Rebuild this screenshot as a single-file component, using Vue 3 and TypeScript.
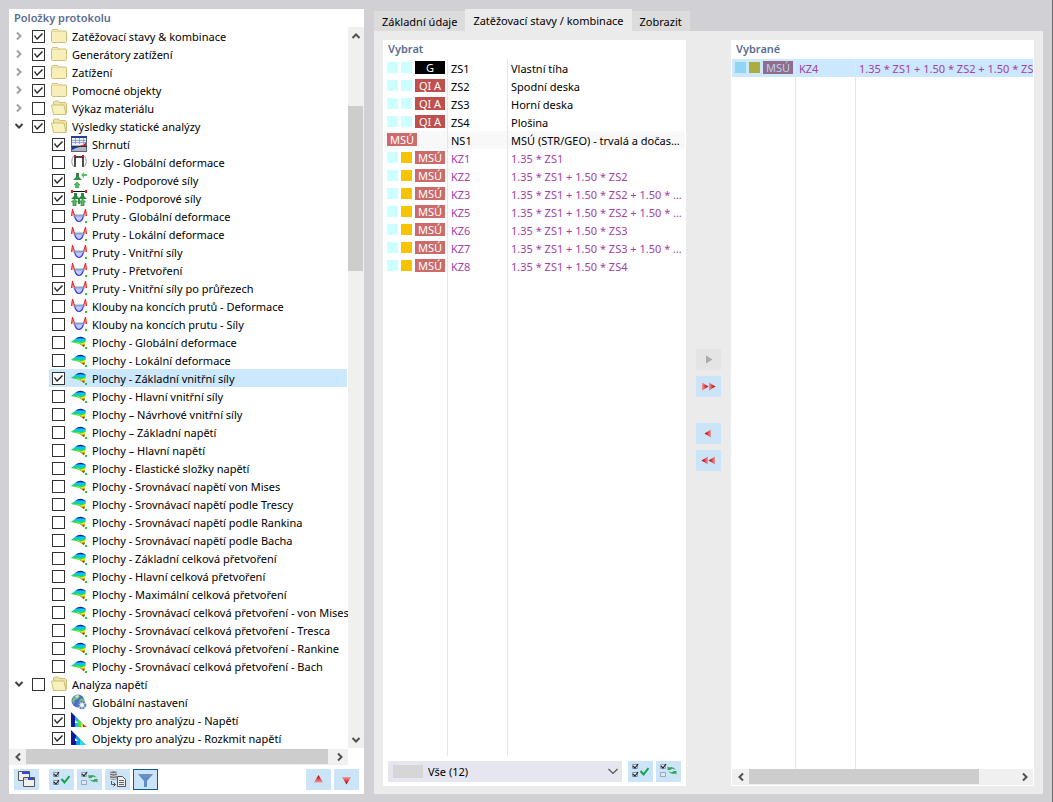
<script setup lang="ts">
import { ref } from 'vue'

interface TreeItem {
  text: string
  icon: string
  checked: boolean
  level: number
  open?: boolean
  selected?: boolean
}

interface CaseRow {
  swatches: string[]
  badge: string
  kind: string
  id: string
  text: string
  combo?: boolean
  group?: boolean
  selected?: boolean
}

const folder = (text: string, icon: string, checked: boolean, open = false): TreeItem => ({ text, icon, checked, level: 0, open })
const leaf = (text: string, icon: string, checked = false, selected = false): TreeItem => ({ text, icon, checked, level: 1, selected })

const items = ref<TreeItem[]>([
  folder('Zatěžovací stavy & kombinace', 'folder', true),
  folder('Generátory zatížení', 'folder', true),
  folder('Zatížení', 'folder', true),
  folder('Pomocné objekty', 'folder', true),
  folder('Výkaz materiálu', 'folder-open', false),
  folder('Výsledky statické analýzy', 'folder-open', true, true),
  leaf('Shrnutí', 'summary', true),
  leaf('Uzly - Globální deformace', 'node-deform'),
  leaf('Uzly - Podporové síly', 'node-support', true),
  leaf('Linie - Podporové síly', 'line-support', true),
  leaf('Pruty - Globální deformace', 'member'),
  leaf('Pruty - Lokální deformace', 'member'),
  leaf('Pruty - Vnitřní síly', 'member'),
  leaf('Pruty - Přetvoření', 'member'),
  leaf('Pruty - Vnitřní síly po průřezech', 'member', true),
  leaf('Klouby na koncích prutů - Deformace', 'member'),
  leaf('Klouby na koncích prutu - Síly', 'member'),
  leaf('Plochy - Globální deformace', 'surface'),
  leaf('Plochy - Lokální deformace', 'surface'),
  leaf('Plochy - Základní vnitřní síly', 'surface', true, true),
  leaf('Plochy - Hlavní vnitřní síly', 'surface'),
  leaf('Plochy – Návrhové vnitřní síly', 'surface'),
  leaf('Plochy – Základní napětí', 'surface'),
  leaf('Plochy – Hlavní napětí', 'surface'),
  leaf('Plochy - Elastické složky napětí', 'surface'),
  leaf('Plochy - Srovnávací napětí von Mises', 'surface'),
  leaf('Plochy - Srovnávací napětí podle Trescy', 'surface'),
  leaf('Plochy - Srovnávací napětí podle Rankina', 'surface'),
  leaf('Plochy - Srovnávací napětí podle Bacha', 'surface'),
  leaf('Plochy - Základní celková přetvoření', 'surface'),
  leaf('Plochy - Hlavní celková přetvoření', 'surface'),
  leaf('Plochy - Maximální celková přetvoření', 'surface'),
  leaf('Plochy - Srovnávací celková přetvoření - von Mises', 'surface'),
  leaf('Plochy - Srovnávací celková přetvoření - Tresca', 'surface'),
  leaf('Plochy - Srovnávací celková přetvoření - Rankine', 'surface'),
  leaf('Plochy - Srovnávací celková přetvoření - Bach', 'surface'),
  folder('Analýza napětí', 'folder-open', false, true),
  leaf('Globální nastavení', 'globe'),
  leaf('Objekty pro analýzu - Napětí', 'stress', true),
  leaf('Objekty pro analýzu - Rozkmit napětí', 'stress-range', true),
])

const load = (id: string, text: string, badge: string, kind: string): CaseRow => ({ swatches: ['aqua', 'aqua'], badge, kind, id, text })
const combo = (id: string, text: string): CaseRow => ({ swatches: ['aqua', 'gold'], badge: 'MSÚ', kind: 'uls', id, text, combo: true })

const available: CaseRow[] = [
  load('ZS1', 'Vlastní tíha', 'G', 'dead'),
  load('ZS2', 'Spodní deska', 'QI A', 'live'),
  load('ZS3', 'Horní deska', 'QI A', 'live'),
  load('ZS4', 'Plošina', 'QI A', 'live'),
  { swatches: [], badge: 'MSÚ', kind: 'uls', id: 'NS1', text: 'MSÚ (STR/GEO) - trvalá a dočasná', group: true },
  combo('KZ1', '1.35 * ZS1'),
  combo('KZ2', '1.35 * ZS1 + 1.50 * ZS2'),
  combo('KZ3', '1.35 * ZS1 + 1.50 * ZS2 + 1.50 * ZS3'),
  combo('KZ5', '1.35 * ZS1 + 1.50 * ZS2 + 1.50 * ZS4'),
  combo('KZ6', '1.35 * ZS1 + 1.50 * ZS3'),
  combo('KZ7', '1.35 * ZS1 + 1.50 * ZS3 + 1.50 * ZS4'),
  combo('KZ8', '1.35 * ZS1 + 1.50 * ZS4'),
]

const chosen: CaseRow[] = [
  { swatches: ['sky', 'olive'], badge: 'MSÚ', kind: 'muted', id: 'KZ4', text: '1.35 * ZS1 + 1.50 * ZS2 + 1.50 * ZS3 + 1.50 * ZS4', combo: true, selected: true },
]

const lists = [
  { key: 'available', title: 'Vybrat', rows: available },
  { key: 'chosen', title: 'Vybrané', rows: chosen },
]

const tabs = ['Základní údaje', 'Zatěžovací stavy / kombinace', 'Zobrazit']
const activeTab = ref(1)
const filter = ref('all')

const tools = [
  { icon: 'windows', label: 'Okna' },
  { icon: 'check-all', label: 'Vybrat vše' },
  { icon: 'check-invert', label: 'Invertovat výběr' },
  { icon: 'data-copy', label: 'Převzít data' },
  { icon: 'funnel', label: 'Filtr' },
]
const transfers = [
  { icon: 'right-grey', label: 'Přidat', off: true },
  { icon: 'right-all', label: 'Přidat vše', off: false },
  { icon: 'left', label: 'Odebrat', off: false },
  { icon: 'left-all', label: 'Odebrat vše', off: false },
]
</script>

<template>
  <svg class="defs" aria-hidden="true">
    <defs>
      <linearGradient id="red-r"><stop offset="0" stop-color="#ec9a9a" /><stop offset="0.8" stop-color="#c80c10" /></linearGradient>
      <linearGradient id="red-l"><stop offset="0.2" stop-color="#c80c10" /><stop offset="1" stop-color="#ec9a9a" /></linearGradient>
      <linearGradient id="red-v" x2="0" y2="1"><stop offset="0.2" stop-color="#c80c10" /><stop offset="1" stop-color="#f09a9a" /></linearGradient>
      <linearGradient id="red-d" x2="0" y2="1"><stop offset="0" stop-color="#f09a9a" /><stop offset="0.8" stop-color="#c80c10" /></linearGradient>

      <symbol id="folder" viewBox="0 0 16 16">
        <path d="M.5 13.5V3.5l1-2h5l1 1.500h7.500l.5.5v10l-1 1h-13z" fill="#f7eeb8" stroke="#cdbf78" />
        <path d="M1.500 3.500h6" stroke="#e1d695" fill="none" />
      </symbol>
      <symbol id="folder-open" viewBox="0 0 16 16">
        <path d="M2.500 4V2l1-1h4l1 1.500h6l1 1V13l-1 1h-12z" fill="#efe4a4" stroke="#cdbf78" />
        <path d="M.5 5h12.500l2 9.500H2.500z" fill="#f8f0bd" stroke="#cdbf78" />
      </symbol>
      <symbol id="summary" viewBox="0 0 16 16">
        <path d="M0 0h16v16H0z" fill="#56617c" />
        <path d="M0 0h16v2H0z" fill="#25418f" />
        <path d="M1 2h14v7H1z" fill="#eef1fa" />
        <path d="M1 4.500h14M1 6.500h14M4.500 2v6M8.500 2v6M12.500 2v6" stroke="#8496cc" stroke-width=".8" fill="none" />
        <path d="M1 9h14v6H1z" fill="#b4b7c0" />
        <path d="M15 6v4H8q5-.5 7-4z" fill="#cc2a17" />
        <path d="M1 14v-3h8q-4 .5-8 3z" fill="#1237b0" />
        <path d="M0 10.500h16" stroke="#2b3244" />
      </symbol>
      <symbol id="node-deform" viewBox="0 0 16 16">
        <path d="M4 13V3h8v10" fill="none" stroke="#111" stroke-width="1.500" />
        <path d="M2.500 2Q-1 7.500 2.500 12.500M13.500 2q3.500 5.500 0 10.500" fill="none" stroke="#999" />
        <path d="M3 1h2v2H3zM11 1h2v2h-2z" fill="#e01818" />
        <path d="M3 11h2v2H3zM11 11h2v2h-2z" fill="#555" />
      </symbol>
      <symbol id="node-support" viewBox="0 0 16 16">
        <path d="M5 2h3v3l3 3H2l3-3z" fill="#2e9148" />
        <path d="M5 1h3v3H5z" fill="#4b7757" />
        <path d="M10 3l3-3v2h3v2h-3v2z" fill="#5cbc67" />
        <path d="M6 10l3 3H7.500v3h-3v-3H3z" fill="#4abf5c" stroke="#258b3a" stroke-width=".5" />
      </symbol>
      <symbol id="line-support" viewBox="0 0 16 16">
        <path d="M1 1.500h14" stroke="#111" />
        <path d="M0 0h2v3H0zM14 0h2v3h-2z" fill="#ee1717" />
        <path d="M3 3h3v3l2 2 2-2V3h3v3l3 3H0l3-3z" fill="#2b8a42" />
        <path d="M3.500 9l3 3H5v4H2v-4H.5zM11.500 9l3 3H13v4h-3v-4H8.500z" fill="#50bd5f" stroke="#23823a" stroke-width=".7" />
        <path d="M7 9h2v5H7z" fill="#2f9045" />
      </symbol>
      <symbol id="member" viewBox="0 0 16 16">
        <path d="M3.500 8q1.500 5.500 4.500 5.500T12.500 8z" fill="#c3c8fb" />
        <path d="M3.500 8q1.500 5.500 4.500 5.500T12.500 8" fill="none" stroke="#3838f0" stroke-width="1.200" />
        <path d="M2 7.500h12" stroke="#7fa6c8" stroke-width="2" />
        <path d="M1 1L.5 8H4zM15 1l.5 7H12z" fill="#f6a0a0" />
        <path d="M.5 8L1.500 1 3.500 7.500M15.500 8l-1-7-2 6.500" stroke="#e81e1e" fill="none" />
        <path d="M14 13h2v2h-2z" fill="#24c72f" />
      </symbol>
      <symbol id="surface" viewBox="0 0 16 16">
        <path d="M0 8l4-3q5-2.500 11 0l-2 8Q8 8.500 0 8z" fill="#05c8f2" />
        <path d="M4 5q3-2.500 6-2.300T15 5q-6-1.700-11 0z" fill="#10249d" />
        <path d="M0 8l3-1.500q4 0 7 2l4.500-2.500L13 13Q8 8.500 0 8z" fill="#25dc45" />
        <path d="M5 8q3 .3 5 1.500l4.200-1.500L13 13Q9.500 9.500 5 8z" fill="#f7ee10" />
        <path d="M8 9.300q2 .4 3 1.200l2.800-.5L13 13q-2-2.500-5-3.700z" fill="#f18500" />
        <path d="M10.500 11q1.500.2 3 .2L13 13z" fill="#c81408" />
        <path d="M14 13h2v2h-2z" fill="#24c72f" />
      </symbol>
      <symbol id="globe" viewBox="0 0 16 16">
        <circle cx="7" cy="7" r="6.500" fill="#4670cc" />
        <path d="M2 4l3-3 4 1-2 3-3 1-1 4-2-3zM9 5l4-1v4l-3 2-2-2z" fill="#79bd79" />
        <path d="M4 2l3-1 1 1-2 2z" fill="#d5e8ef" />
        <circle cx="11" cy="11" r="3.300" fill="#dce6f4" stroke="#6586b6" stroke-width="2.200" stroke-dasharray="2 .7" />
        <path d="M10 10h2v2h-2z" fill="#fff" />
      </symbol>
      <symbol id="stress" viewBox="0 0 16 16">
        <path d="M0 0l4 4v11H0z" fill="#10189c" />
        <path d="M4 4l3 3v8H4z" fill="#13bdf5" />
        <path d="M7 7l3 3v5H7z" fill="#50df52" />
        <path d="M10 10l3 3v2h-3z" fill="#f6e600" />
        <path d="M12 12l4 3h-4z" fill="#d81c0b" />
        <path d="M4 8l3 3H4z" fill="#fff" />
        <path d="M0 0l15 15" stroke="#8c9b9b" stroke-width=".6" />
      </symbol>
      <symbol id="stress-range" viewBox="0 0 16 16">
        <path d="M0 0l5 5v10H0z" fill="#10189c" />
        <path d="M5 5l4 4v6H5z" fill="#159af0" />
        <path d="M9 9l6 6H9z" fill="#17e5f4" />
        <path d="M4 8l3 3H4z" fill="#fff" />
        <path d="M0 0l15 15" stroke="#8c9b9b" stroke-width=".6" />
      </symbol>

      <symbol id="windows" viewBox="0 0 17 17">
        <path d="M.5.5h11v9H.5z" fill="#eee" stroke="#555" />
        <path d="M4 1h7v2H4z" fill="#2f48e0" />
        <path d="M5.500 6.500h11v9h-11z" fill="#f1f1f1" stroke="#555" />
        <path d="M6 7h10v2H6z" fill="#cfcfcf" /><path d="M10 7h6v2h-6z" fill="#2f48e0" />
      </symbol>
      <symbol id="check-all" viewBox="0 0 17 17">
        <path d="M.5 1.500h5v4h-5zM.5 9.500h5v4h-5z" fill="#eef3f7" stroke="#8496a6" />
        <path d="M1 3l2 2 3-4M1 11l2 2 3-4" fill="none" stroke="#222" stroke-width="1.200" />
        <path d="M8.500 8l3 3.500L16.500 5" fill="none" stroke="#12a347" stroke-width="2" />
      </symbol>
      <symbol id="check-invert" viewBox="0 0 17 17">
        <path d="M.5 1.500h5v4h-5zM.5 9.500h5v4h-5z" fill="#dce9f4" stroke="#9baab7" />
        <path d="M1 3l2 2 3-4" fill="none" stroke="#222" stroke-width="1.200" />
        <path d="M7.500 7V3.500l1.500 1q4-1.500 7 2.500-3.500-2-5.500-.8l1 .8zM16.500 8v3.500l-1.500-1q-4 1.500-7-2.500 3.500 2 5.500.8l-1-.8z" fill="#35a457" />
      </symbol>
      <symbol id="data-copy" viewBox="0 0 17 17">
        <path d="M1 1q3.500-1.500 7 0v7q-3.500 1.500-7 0z" fill="#777" />
        <path d="M1 2q3.500 1.500 7 0M1 4.500q3.500 1.500 7 0M1 7q3.500 1.500 7 0" fill="none" stroke="#ddd" />
        <path d="M2.500 10v3.500h4M4.500 11.500l2 2-2 2" fill="none" stroke="#555" />
        <path d="M8.500 5.500h5l3 3v7h-8z" fill="#eee" stroke="#555" />
        <path d="M10 9.500h5M10 11.500h5M10 13.500h5" stroke="#666" />
      </symbol>
      <symbol id="funnel" viewBox="0 0 17 17">
        <path d="M1 3h15l-6 7v6H7v-6z" fill="#5f8cc6" /><path d="M2 3h13l-2 3H5z" fill="#718fbe" />
      </symbol>
      <symbol id="up" viewBox="0 0 17 17"><path d="M8.500 4l4.500 7.500H4z" fill="url(#red-v)" /></symbol>
      <symbol id="down" viewBox="0 0 17 17"><path d="M4 6h9l-4.500 7.500z" fill="url(#red-d)" /></symbol>
      <symbol id="right-grey" viewBox="0 0 17 17"><path d="M6 4.500l6.500 4L6 12.500z" fill="#aaa" /></symbol>
      <symbol id="right-all" viewBox="0 0 17 17">
        <path d="M2 4.500l6.500 4L2 12.500z" fill="url(#red-r)" /><path d="M9 4.500l6.500 4L9 12.500z" fill="url(#red-r)" />
      </symbol>
      <symbol id="left" viewBox="0 0 17 17"><path d="M11 4.500v8l-6.500-4z" fill="url(#red-l)" /></symbol>
      <symbol id="left-all" viewBox="0 0 17 17">
        <path d="M8 4.500v8l-6.500-4z" fill="url(#red-l)" /><path d="M15 4.500v8l-6.500-4z" fill="url(#red-l)" />
      </symbol>
      <symbol id="chevron" viewBox="0 0 10 10"><path d="M3 1.500L6.500 5 3 8.500" fill="none" stroke="currentColor" stroke-width="2" /></symbol>
      <symbol id="chevron-thin" viewBox="0 0 10 10"><path d="M3 .5L7.500 5 3 9.500" fill="none" stroke="currentColor" stroke-width="1.200" /></symbol>
    </defs>
  </svg>

  <main class="window">
    <section class="panel tree-panel">
      <h2>Položky protokolu</h2>
      <div class="tree-body">
        <div class="tree-main">
          <ul class="tree">
            <li v-for="item in items" :key="item.text" :class="['row', item.level ? 'leaf' : 'branch', { selected: item.selected }]">
              <button v-if="!item.level" type="button" :class="['twist', { open: item.open }]" :aria-label="item.text" @click="item.open = !item.open">
                <svg><use href="#chevron" /></svg>
              </button>
              <label>
                <input v-model="item.checked" type="checkbox">
                <svg class="item-icon" aria-hidden="true"><use :href="'#' + item.icon" /></svg>
                <span>{{ item.text }}</span>
              </label>
            </li>
          </ul>
          <div class="scroll horizontal">
            <button type="button" class="to-left" aria-label="Doleva"><svg><use href="#chevron" /></svg></button>
            <div class="track"><div class="thumb wide" /></div>
            <button type="button" aria-label="Doprava"><svg><use href="#chevron" /></svg></button>
          </div>
        </div>
        <div class="scroll vertical">
          <button type="button" class="to-up" aria-label="Nahoru"><svg><use href="#chevron" /></svg></button>
          <div class="track"><div class="thumb" /></div>
          <button type="button" class="to-down" aria-label="Dolů"><svg><use href="#chevron" /></svg></button>
        </div>
      </div>
      <div class="toolbar">
        <button v-for="tool in tools" :key="tool.icon" type="button" :class="['tool', tool.icon]" :aria-label="tool.label">
          <svg><use :href="'#' + tool.icon" /></svg>
        </button>
        <button type="button" class="tool push" aria-label="Posunout nahoru"><svg><use href="#up" /></svg></button>
        <button type="button" class="tool" aria-label="Posunout dolů"><svg><use href="#down" /></svg></button>
      </div>
    </section>

    <section class="detail">
      <nav class="tabs" role="tablist">
        <button v-for="(tab, i) in tabs" :key="tab" type="button" role="tab" :aria-selected="i === activeTab" :class="['tab', { active: i === activeTab }]" @click="activeTab = i">{{ tab }}</button>
      </nav>
      <div class="page">
        <template v-for="list in lists" :key="list.key">
          <div v-if="list.key === 'chosen'" class="transfer">
            <button v-for="t in transfers" :key="t.icon" type="button" :class="['tool', t.icon]" :disabled="t.off" :aria-label="t.label">
              <svg><use :href="'#' + t.icon" /></svg>
            </button>
          </div>
          <div :class="['panel', 'list', list.key]">
            <h2>{{ list.title }}</h2>
            <div class="sheet">
              <table :aria-label="list.title">
                <colgroup><col class="c-badge"><col class="c-id"><col></colgroup>
                <tbody>
                  <tr v-for="row in list.rows" :key="row.id" :class="{ combo: row.combo, group: row.group, selected: row.selected }">
                    <td>
                      <div class="marks">
                        <i v-for="(s, i) in row.swatches" :key="i" :class="['swatch', s]" />
                        <b :class="['badge', row.kind]">{{ row.badge }}</b>
                      </div>
                    </td>
                    <td>{{ row.id }}</td>
                    <td>{{ row.text }}</td>
                  </tr>
                </tbody>
              </table>
            </div>
            <div v-if="list.key === 'available'" class="filter">
              <div class="combo-box">
                <select v-model="filter" aria-label="Filtr seznamu"><option value="all">Vše (12)</option></select>
                <i class="chip" />
                <svg class="arrow" aria-hidden="true"><use href="#chevron-thin" /></svg>
              </div>
              <button type="button" class="tool" aria-label="Vybrat vše"><svg><use href="#check-all" /></svg></button>
              <button type="button" class="tool" aria-label="Invertovat výběr"><svg><use href="#check-invert" /></svg></button>
            </div>
            <div v-else class="scroll horizontal">
              <button type="button" class="to-left" aria-label="Doleva"><svg><use href="#chevron" /></svg></button>
              <div class="track"><div class="thumb" /></div>
              <button type="button" aria-label="Doprava"><svg><use href="#chevron" /></svg></button>
            </div>
          </div>
        </template>
      </div>
    </section>
  </main>
</template>

<style>
body {
  background: #d1d0d5;
}
</style>

<style scoped>
* {
  box-sizing: border-box;
}

.defs {
  position: absolute;
  width: 0;
  height: 0;
}

.window {
  display: grid;
  grid-template-columns: minmax(0, 355fr) minmax(0, 669fr);
  gap: 10px;
  min-height: 100vh;
  padding: 9px 9px 8px;
  border-right: 1px solid #6a6a6c;
  background: #d1d0d5;
  color: #000;
  font: 11px/18px "Noto Sans", "Open Sans", sans-serif;
}

button,
select {
  margin: 0;
  padding: 0;
  border: 0;
  border-radius: 0;
  color: inherit;
  font: inherit;
}

svg {
  display: block;
}

.panel {
  display: flex;
  flex-direction: column;
  min-width: 0;
  background: #fff;
}

h2 {
  margin: 0;
  padding-left: 5px;
  color: #5b6d94;
  font-size: 11px;
  font-weight: 600;
  line-height: 18px;
}

.tree-body {
  display: flex;
  flex: 1;
}

.tree-main {
  display: flex;
  flex: 1;
  flex-direction: column;
  gap: 2px;
  min-width: 0;
}

.tree {
  flex: 1;
  margin: 0;
  padding: 0;
  overflow: hidden;
  list-style: none;
}

.row {
  display: flex;
  height: 18px;
  white-space: nowrap;
}

.branch {
  padding-left: 5px;
}

.leaf {
  margin: 0 1px 0 40px;
  padding-left: 3px;
}

.row.selected,
tr.selected {
  background: #cce8ff;
}

.twist {
  width: 18px;
  background: none;
  color: #a0a0a0;
}

.twist svg {
  width: 10px;
  height: 10px;
}

.twist.open {
  color: #404040;
}

.twist.open svg,
.to-down svg {
  transform: rotate(90deg);
}

label {
  display: flex;
  align-items: center;
}

input {
  position: relative;
  width: 13px;
  height: 13px;
  margin: 1px 6px 0 0;
  border: 1px solid #333;
  background: #fff;
  appearance: none;
}

input:checked::after {
  display: block;
  width: 11px;
  height: 11px;
  background: #222;
  clip-path: polygon(1px 5px, 2px 4px, 4px 7px, 9px 2px, 10px 3px, 4px 9px);
  content: "";
}

.item-icon {
  width: 16px;
  height: 16px;
  margin-right: 5px;
}

label span {
  padding-top: 2px;
  line-height: 16px;
}

.scroll {
  display: flex;
  background: #f0f0f0;
}

.scroll button {
  display: flex;
  flex: 0 0 17px;
  align-items: center;
  justify-content: center;
  background: none;
  color: #505050;
}

.scroll button svg {
  width: 10px;
  height: 10px;
}

.to-left svg {
  transform: rotate(180deg);
}

.to-up svg {
  transform: rotate(-90deg);
}

.horizontal {
  height: 16px;
}

.track {
  flex: 1;
}

.thumb {
  background: #cdcdcd;
}

.horizontal .thumb {
  width: 86%;
  height: 15px;
}

.horizontal .wide {
  width: 99%;
}

.vertical {
  flex: 0 0 16px;
  flex-direction: column;
  margin-bottom: 17px;
  padding-right: 1px;
}

.vertical .track {
  padding-top: 62px;
}

.vertical .thumb {
  height: 165px;
}

.toolbar {
  display: flex;
  gap: 3px;
  padding: 4px 5px;
}

.tool {
  display: flex;
  flex: 0 0 25px;
  align-items: center;
  justify-content: center;
  height: 21px;
  background: #cce4f7;
}

.tool svg {
  width: 17px;
  height: 17px;
}

.tool.windows {
  margin-right: 7px;
}

.tool.funnel {
  border: 1px solid #0a5a9c;
}

.tool.push {
  margin-left: auto;
}

.detail {
  display: flex;
  flex-direction: column;
  min-width: 0;
}

.tabs {
  display: flex;
  align-items: flex-end;
  height: 22px;
}

.tab {
  height: 20px;
  padding: 2px 8px 0;
  background: #dcdcdc;
  white-space: nowrap;
}

.tab.active {
  height: 22px;
  background: #ebebeb;
}

.page {
  display: grid;
  flex: 1;
  grid-template-columns: minmax(0, 1fr) 25px minmax(0, 1fr);
  gap: 10px;
  padding: 9px 9px 8px;
  background: #ebebeb;
}

.list {
  padding: 0 1px 1px;
}

.list h2 {
  padding: 0 0 1px 4px;
}

.sheet {
  flex: 1;
  overflow: hidden;
  background:
    linear-gradient(#e6e6e6, #e6e6e6) 63px 0 / 1px 100% no-repeat,
    linear-gradient(#e6e6e6, #e6e6e6) 123px 0 / 1px 100% no-repeat;
}

table {
  width: 100%;
  border-collapse: collapse;
  table-layout: fixed;
}

.c-badge {
  width: 64px;
}

.c-id {
  width: 60px;
}

td {
  height: 18px;
  padding: 2px 3px 0;
  overflow: hidden;
  line-height: 16px;
  text-overflow: ellipsis;
  white-space: nowrap;
}

.chosen td {
  padding-right: 0;
  text-overflow: clip;
}

td:not(:last-child) {
  background: linear-gradient(#e6e6e6, #e6e6e6) right / 1px 100% no-repeat;
}

td:first-child {
  padding: 0 0 0 3px;
}

tr.group {
  background: #f8f8f8;
}

tr.combo {
  color: #a33fa8;
}

.marks {
  display: flex;
  gap: 3px;
  height: 14px;
}

.swatch {
  width: 11px;
  height: 11px;
  margin-top: 1px;
}

.aqua {
  background: #ccffff;
}

.gold {
  background: #f8c300;
}

.sky {
  background: #91d5f3;
}

.olive {
  background: #abae3f;
}

.badge {
  width: 30px;
  height: 13px;
  color: #fff;
  font-size: 11px;
  font-weight: 400;
  line-height: 14px;
  text-align: center;
}

.dead {
  background: #000;
}

.live {
  background: #c0504d;
}

.uls {
  background: #cd6b6b;
}

.muted {
  background: #916d8b;
  color: #b9d3ea;
}

.filter {
  display: flex;
  gap: 3px;
  padding: 5px 4px 3px;
}

.combo-box {
  position: relative;
  flex: 1;
  margin-right: 3px;
}

select {
  display: block;
  width: 100%;
  height: 21px;
  padding-left: 40px;
  background: #e6e6f1;
  appearance: none;
}

.chip {
  position: absolute;
  top: 4px;
  left: 5px;
  width: 30px;
  height: 13px;
  background: #d6d6d6;
  pointer-events: none;
}

.arrow {
  position: absolute;
  top: 5px;
  right: 4px;
  width: 10px;
  height: 10px;
  color: #555;
  transform: rotate(90deg);
  pointer-events: none;
}

.transfer {
  display: flex;
  flex-direction: column;
  gap: 6px;
  padding-top: 309px;
}

.transfer .tool {
  flex: 0 0 21px;
}

.tool.right-grey {
  background: #e4e4e4;
}

.tool.right-all {
  margin-bottom: 20px;
}
</style>
